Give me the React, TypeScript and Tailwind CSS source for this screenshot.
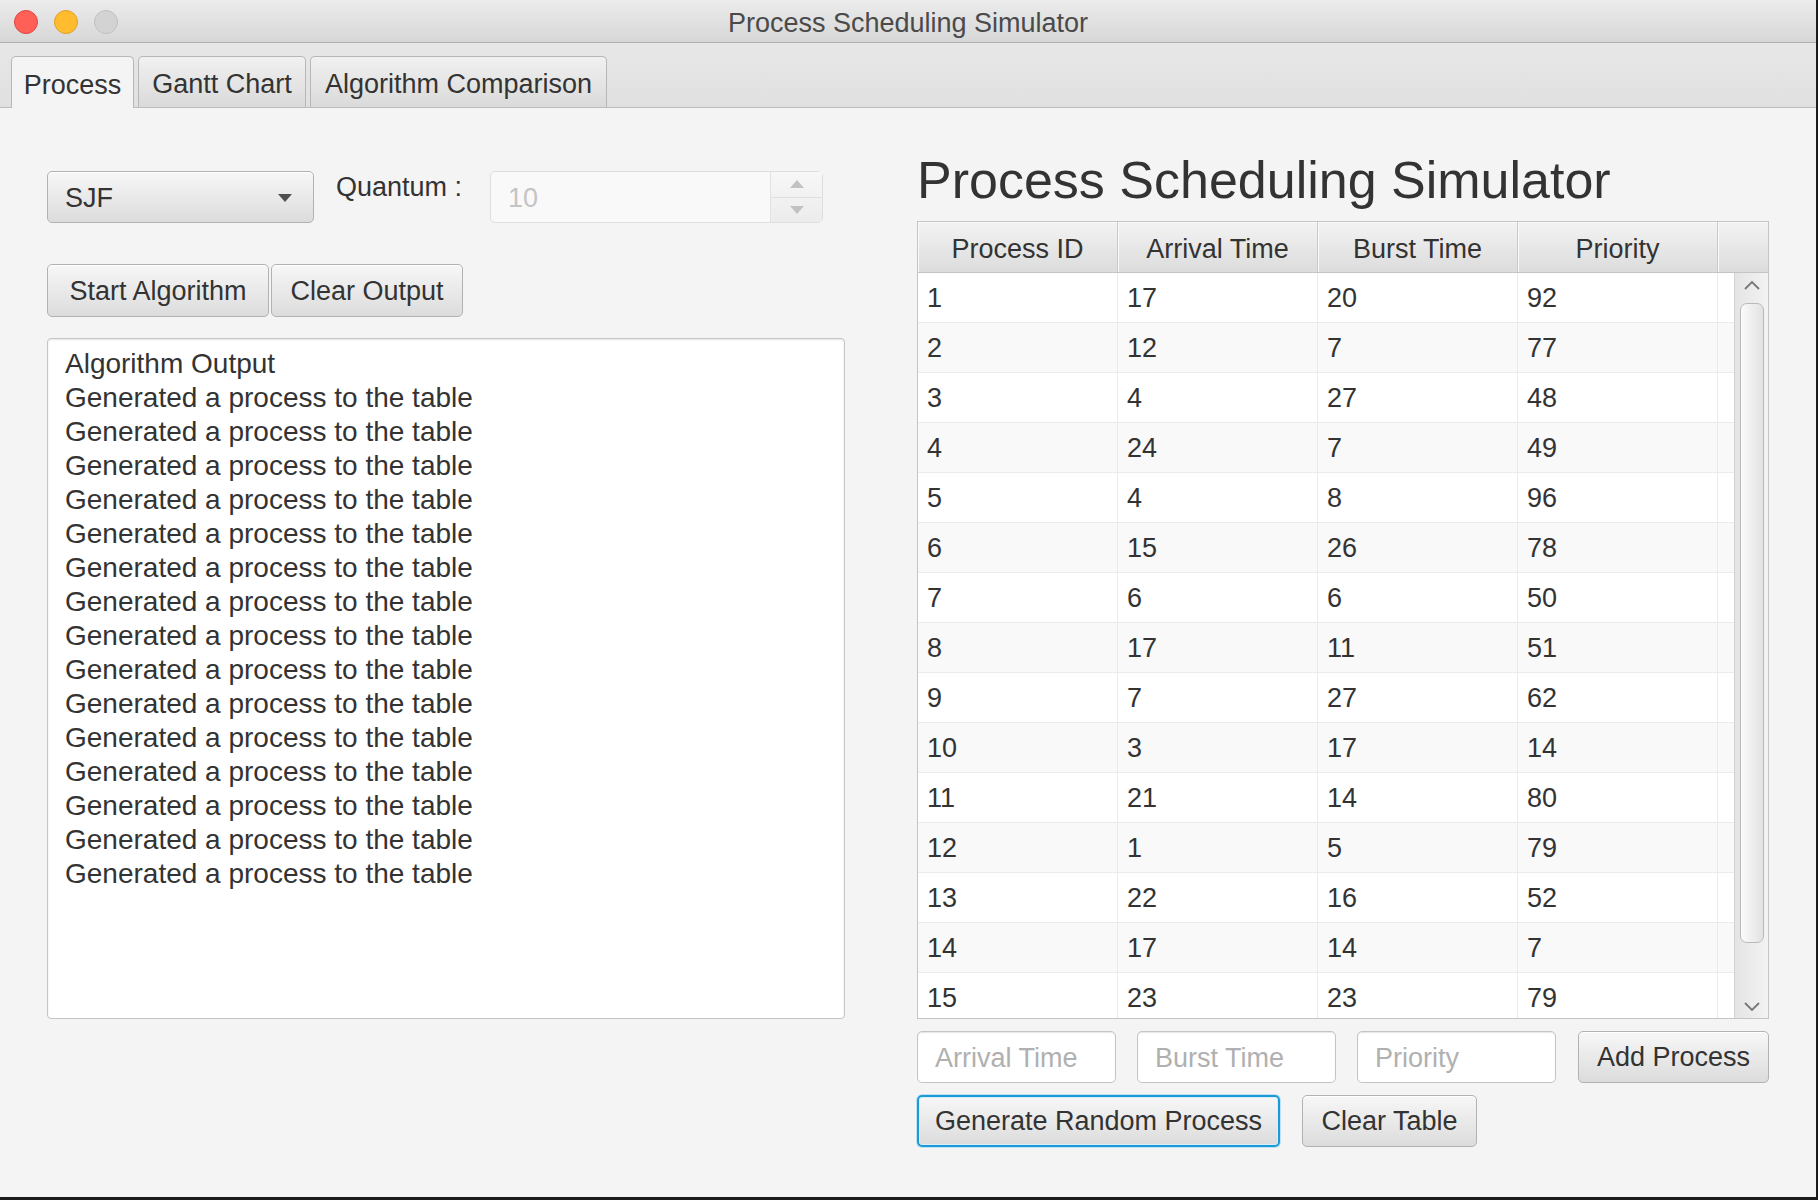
import React from "react";

const rows = [
  [1, 17, 20, 92],
  [2, 12, 7, 77],
  [3, 4, 27, 48],
  [4, 24, 7, 49],
  [5, 4, 8, 96],
  [6, 15, 26, 78],
  [7, 6, 6, 50],
  [8, 17, 11, 51],
  [9, 7, 27, 62],
  [10, 3, 17, 14],
  [11, 21, 14, 80],
  [12, 1, 5, 79],
  [13, 22, 16, 52],
  [14, 17, 14, 7],
  [15, 23, 23, 79],
];

const outputLines = [
  "Algorithm Output",
  ...Array.from({ length: 15 }, () => "Generated a process to the table"),
];

const headers = ["Process ID", "Arrival Time", "Burst Time", "Priority"];

function Button({ label, className = "" }: { label: string; className?: string }) {
  return (
    <button
      type="button"
      className={`flex h-[52px] items-center justify-center rounded-[5px] border border-[#b2b2b2] bg-gradient-to-b from-[#f7f7f7] to-[#dcdcdc] pt-[1px] text-[27px] text-[#333] shadow-[inset_0_1px_0_#ffffff] ${className}`}
    >
      {label}
    </button>
  );
}

function TextField({ placeholder, className = "" }: { placeholder: string; className?: string }) {
  return (
    <div
      className={`flex h-[52px] items-center rounded-[5px] border border-[#c4c4c4] bg-white pl-[17px] pt-[2px] text-[27px] text-[#b0b0b0] shadow-[inset_0_1px_1px_#e6e6e6] ${className}`}
    >
      {placeholder}
    </div>
  );
}

function Chevron({ up }: { up?: boolean }) {
  return (
    <svg width="18" height="11" viewBox="0 0 18 11">
      <path
        d={up ? "M2 9 L9 2 L16 9" : "M2 2 L9 9 L16 2"}
        fill="none"
        stroke="#777"
        strokeWidth="1.8"
      />
    </svg>
  );
}

function ProcessTable() {
  return (
    <div className="mt-[11px] flex h-[798px] flex-col border border-[#c4c4c4] bg-white">
      <div className="flex h-[51px] border-b border-[#c4c4c4]">
        {headers.map((h) => (
          <div
            key={h}
            className="flex w-[200px] items-center justify-center border-r border-[#c9c9c9] bg-gradient-to-b from-[#f3f3f3] to-[#dcdcdc] pt-[4px] text-[27px] text-[#333] shadow-[inset_1px_1px_0_#fafafa]"
          >
            {h}
          </div>
        ))}
        <div className="flex-1 bg-gradient-to-b from-[#f3f3f3] to-[#dcdcdc] shadow-[inset_1px_1px_0_#fafafa]" />
      </div>
      <div className="flex min-h-0 flex-1">
        <div className="flex-1 overflow-hidden">
          {rows.map((r, i) => (
            <div
              key={r[0]}
              className={`flex h-[50px] border-b border-[#ebebeb] ${i % 2 === 0 ? "bg-white" : "bg-[#f9f9f9]"}`}
            >
              {r.map((v, j) => (
                <div
                  key={j}
                  className="flex w-[200px] items-center border-r border-[#ebebeb] pl-[9px] pt-[2px] text-[27px] text-[#333]"
                >
                  {v}
                </div>
              ))}
              <div className="flex-1" />
            </div>
          ))}
        </div>
        <div className="flex w-[34px] flex-col items-center border-l border-[#d2d2d2] bg-gradient-to-r from-[#e4e4e4] to-[#f3f3f3]">
          <div className="flex h-[24px] items-center">
            <Chevron up />
          </div>
          <div className="mt-[6px] h-[640px] w-[24px] rounded-[7px] border border-[#b9b9b9] bg-gradient-to-r from-[#fbfbfb] to-[#e2e2e2]" />
          <div className="mt-auto flex h-[23px] items-center">
            <Chevron />
          </div>
        </div>
      </div>
    </div>
  );
}

export default function App() {
  return (
    <div className="h-[1200px] w-[1818px] bg-[#1c1c1c] font-['Liberation_Sans',Arial,sans-serif]">
      <div className="flex h-[1197px] w-[1816px] flex-col bg-[#f4f4f4]">
        {/* title bar */}
        <div className="grid h-[43px] grid-cols-[1fr_auto_1fr] items-center border-b border-[#b1b1b1] bg-gradient-to-b from-[#ececec] to-[#d7d7d7]">
          <div className="flex items-center gap-[16px] pl-[14px]">
            <span className="h-[24px] w-[24px] rounded-full border border-[#e1463f] bg-[#fe5f57]" />
            <span className="h-[24px] w-[24px] rounded-full border border-[#dfa126] bg-[#febc2e]" />
            <span className="h-[24px] w-[24px] rounded-full border border-[#c0c0c0] bg-[#d3d3d3]" />
          </div>
          <div className="pt-[3px] text-[27px] text-[#4a4a4a]">Process Scheduling Simulator</div>
          <div />
        </div>

        {/* tabs */}
        <div className="flex h-[65px] items-end gap-[4px] border-b border-[#bdbdbd] bg-gradient-to-b from-[#e7e7e7] to-[#e0e0e0] pl-[11px]">
          <div className="-mb-px flex h-[52px] w-[123px] items-center justify-center rounded-t-[5px] border border-b-0 border-[#b7b7b7] bg-[#f4f4f4] pt-[5px] text-[27px] text-[#333]">
            Process
          </div>
          <div className="flex h-[51px] w-[168px] items-center justify-center rounded-t-[5px] border border-b-0 border-[#b7b7b7] bg-gradient-to-b from-[#f1f1f1] to-[#dadada] pt-[5px] text-[27px] text-[#333]">
            Gantt Chart
          </div>
          <div className="flex h-[51px] w-[297px] items-center justify-center rounded-t-[5px] border border-b-0 border-[#b7b7b7] bg-gradient-to-b from-[#f1f1f1] to-[#dadada] pt-[5px] text-[27px] text-[#333]">
            Algorithm Comparison
          </div>
        </div>

        {/* content */}
        <div className="flex flex-1">
          {/* left */}
          <div className="flex w-[845px] flex-col pl-[47px]">
            <div className="mt-[63px] flex h-[52px]">
              <button
                type="button"
                className="flex h-[52px] w-[267px] items-center justify-between rounded-[5px] border border-[#b2b2b2] bg-gradient-to-b from-[#f7f7f7] to-[#dcdcdc] pl-[17px] pr-[20px] pt-[2px] text-[27px] text-[#333] shadow-[inset_0_1px_0_#ffffff]"
              >
                <span>SJF</span>
                <svg width="16" height="10" viewBox="0 0 16 10">
                  <path d="M1 1 H15 L8 9 Z" fill="#505050" />
                </svg>
              </button>
              <div className="ml-[22px] self-start text-[27px] leading-[32px] text-[#333]">Quantum :</div>
              <div className="ml-[28px] flex h-[52px] w-[333px] rounded-[5px] border border-[#dedede] bg-[#f9f9f9]">
                <div className="flex flex-1 items-center pl-[17px] pt-[2px] text-[27px] text-[#c4c4c4]">10</div>
                <div className="flex w-[52px] flex-col border-l border-[#e2e2e2] bg-gradient-to-b from-[#f7f7f7] to-[#ececec]">
                  <div className="flex flex-1 items-center justify-center border-b border-[#e0e0e0]">
                    <svg width="16" height="10" viewBox="0 0 16 10">
                      <path d="M1 9 H15 L8 1 Z" fill="#c2c2c2" />
                    </svg>
                  </div>
                  <div className="flex flex-1 items-center justify-center">
                    <svg width="16" height="10" viewBox="0 0 16 10">
                      <path d="M1 1 H15 L8 9 Z" fill="#c2c2c2" />
                    </svg>
                  </div>
                </div>
              </div>
            </div>

            <div className="mt-[41px] flex gap-[2px]">
              <Button label="Start Algorithm" className="h-[53px] w-[222px]" />
              <Button label="Clear Output" className="h-[53px] w-[192px]" />
            </div>

            <div className="mt-[21px] h-[681px] rounded-[4px] border border-[#c5c5c5] bg-white pl-[17px] pt-[8px] shadow-[inset_0_1px_2px_#e4e4e4]">
              {outputLines.map((line, i) => (
                <div key={i} className="text-[28px] leading-[34px] text-[#333]">
                  {line}
                </div>
              ))}
            </div>
          </div>

          {/* right */}
          <div className="ml-[72px] flex w-[852px] flex-col">
            <h1 className="mt-[42px] text-[52px] leading-[60px] text-[#333]">Process Scheduling Simulator</h1>
            <ProcessTable />

            <div className="mt-[12px] flex">
              <TextField placeholder="Arrival Time" className="w-[199px]" />
              <TextField placeholder="Burst Time" className="ml-[21px] w-[199px]" />
              <TextField placeholder="Priority" className="ml-[21px] w-[199px]" />
              <Button label="Add Process" className="ml-[22px] w-[191px]" />
            </div>

            <div className="mt-[12px] flex">
              <button
                type="button"
                className="flex h-[52px] w-[363px] items-center justify-center rounded-[5px] border-2 border-[#1a9bd7] bg-gradient-to-b from-[#f7f7f7] to-[#dcdcdc] pt-[1px] text-[27px] text-[#333] shadow-[0_0_0_1px_#bfe1f3,inset_0_0_0_1px_#d9eef8]"
              >
                Generate Random Process
              </button>
              <Button label="Clear Table" className="ml-[22px] w-[175px]" />
            </div>
          </div>
        </div>
      </div>
    </div>
  );
}
